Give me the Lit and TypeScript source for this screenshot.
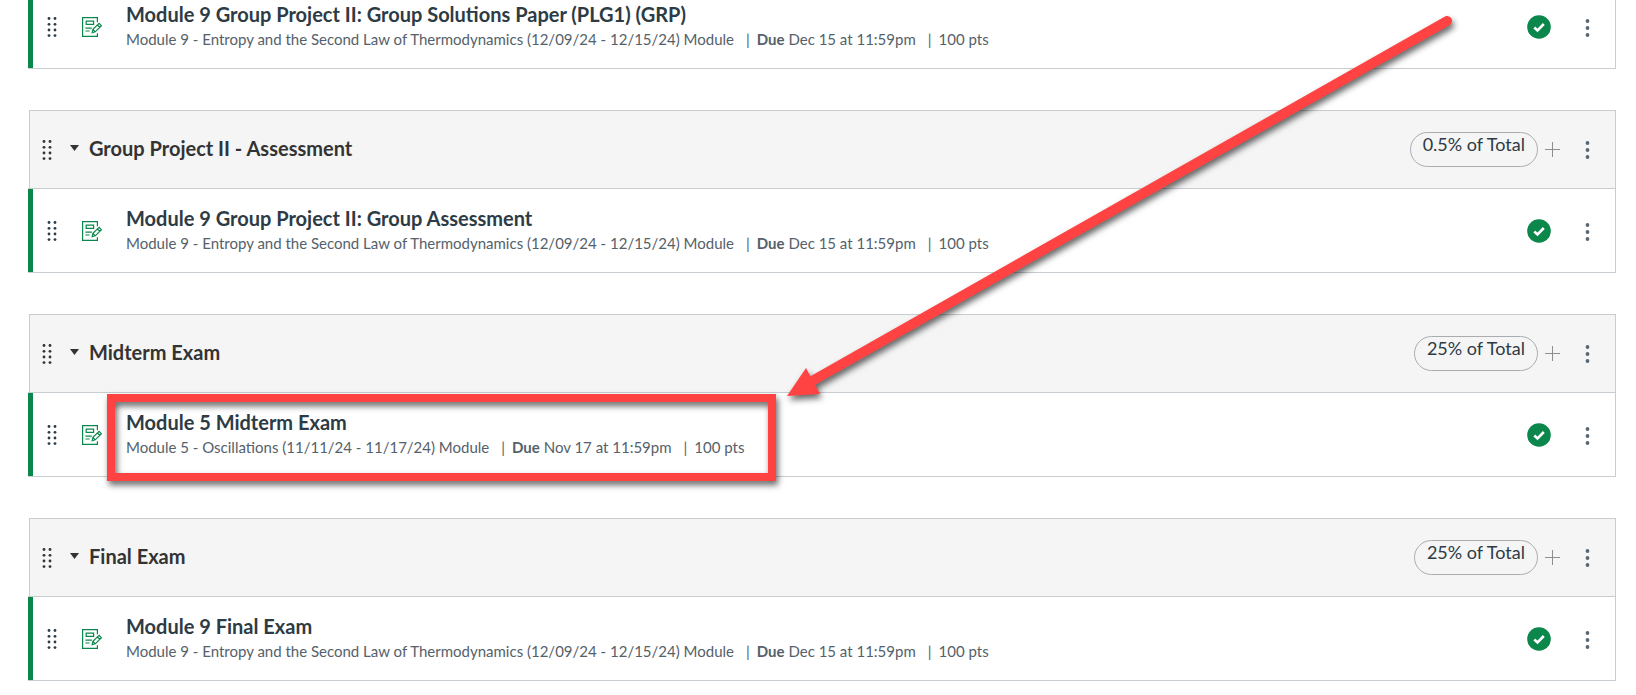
import { LitElement, html, css, svg } from "lit";
import { customElement, property } from "lit/decorators.js";

interface Assignment {
  title: string;
  module: string;
  due: string;
  points: string;
}

interface Group {
  name?: string;
  weight?: string;
  items: Assignment[];
}

const MODULE_9 = "Module 9 - Entropy and the Second Law of Thermodynamics (12/09/24 - 12/15/24) Module";

const GROUPS: Group[] = [
  {
    items: [
      {
        title: "Module 9 Group Project II: Group Solutions Paper (PLG1) (GRP)",
        module: MODULE_9,
        due: "Dec 15 at 11:59pm",
        points: "100 pts",
      },
    ],
  },
  {
    name: "Group Project II - Assessment",
    weight: "0.5% of Total",
    items: [
      {
        title: "Module 9 Group Project II: Group Assessment",
        module: MODULE_9,
        due: "Dec 15 at 11:59pm",
        points: "100 pts",
      },
    ],
  },
  {
    name: "Midterm Exam",
    weight: "25% of Total",
    items: [
      {
        title: "Module 5 Midterm Exam",
        module: "Module 5 - Oscillations (11/11/24 - 11/17/24) Module",
        due: "Nov 17 at 11:59pm",
        points: "100 pts",
      },
    ],
  },
  {
    name: "Final Exam",
    weight: "25% of Total",
    items: [
      {
        title: "Module 9 Final Exam",
        module: MODULE_9,
        due: "Dec 15 at 11:59pm",
        points: "100 pts",
      },
    ],
  },
];

const handleIcon = html`
  <svg class="handle" width="10" height="20" viewBox="0 0 10 20" fill="currentColor" aria-hidden="true">
    ${[1.5, 7.3, 13, 18.6].map(
      (y) => svg`<circle cx="2" cy=${y} r="1.4"></circle><circle cx="8" cy=${y} r="1.4"></circle>`
    )}
  </svg>
`;

const kebabIcon = html`
  <svg width="6" height="20" viewBox="0 0 6 20" fill="currentColor" aria-hidden="true">
    <circle cx="3.5" cy="3" r="1.9"></circle>
    <circle cx="3.5" cy="10" r="1.9"></circle>
    <circle cx="3.5" cy="17" r="1.9"></circle>
  </svg>
`;

const assignmentIcon = html`
  <svg class="kind" width="20" height="20" viewBox="0 0 20 20" fill="none" stroke="currentColor" stroke-width="1.2" aria-hidden="true">
    <path d="M15.4 5.2V0.6H0.6v18.8h14.8v-3.2"></path>
    <path d="M4.2 4.1h7.4v3.2H4.2z"></path>
    <path d="M3.4 11.2h6.4M3.4 14h4.2"></path>
    <path d="M10.2 15.6l.7-3.2 6.2-6 2.3 2.3-6.1 6.1zM15.4 8l2.4 2.4M11 12.5l2.3 2.3"></path>
  </svg>
`;

const sharedStyles = css`
  *,
  *::before {
    box-sizing: border-box;
  }
  button {
    display: flex;
    align-items: center;
    justify-content: center;
    padding: 0;
    border: 0;
    background: none;
    color: inherit;
    font: inherit;
    cursor: pointer;
  }
  svg {
    display: block;
    flex: none;
  }
  .kebab {
    width: 32px;
    height: 36px;
    color: #5b6770;
  }
`;

@customElement("assignment-row")
class AssignmentRow extends LitElement {
  @property({ attribute: false }) item!: Assignment;

  static styles = [
    sharedStyles,
    css`
      :host {
        display: block;
      }
      .row {
        display: flex;
        align-items: center;
        height: 85px;
        margin-left: -1px;
        padding: 0 12px 0 14px;
        border: 1px solid #c7cdd1;
        border-left: 0;
        background: linear-gradient(#0b874b, #0b874b) left / 5px 100% no-repeat border-box #fff;
      }
      .handle {
        margin-left: 5px;
        color: #2d3b45;
      }
      .kind {
        margin-left: 25px;
        color: #0b874b;
      }
      .info {
        flex: 1;
        min-width: 0;
        margin-left: 24px;
      }
      .title {
        display: block;
        color: #2d3b45;
        font-size: 20px;
        font-weight: 700;
        line-height: 24px;
        text-decoration: none;
      }
      .meta {
        display: flex;
        color: #55616a;
        font-size: 15px;
        line-height: 26px;
      }
      .part + .part::before {
        content: "|";
        margin: 0 7px 0 12px;
      }
      .published {
        width: 24px;
        height: 24px;
        margin-right: 20px;
      }
      .kebab {
        padding-top: 2px;
      }
    `,
  ];

  render() {
    const { title, module, due, points } = this.item;
    return html`
      <div class="row">
        ${handleIcon} ${assignmentIcon}
        <div class="info">
          <a class="title" href="#">${title}</a>
          <div class="meta">
            <span class="part">${module}</span>
            <span class="part"><b>Due</b> ${due}</span>
            <span class="part">${points}</span>
          </div>
        </div>
        <button class="published" aria-label="Published">
          <svg width="24" height="24" viewBox="0 0 24 24" aria-hidden="true">
            <circle cx="12" cy="12" r="11.8" fill="#0b874b"></circle>
            <path d="M7.3 12.5l3.2 3L16.8 9" fill="none" stroke="#fff" stroke-width="2.6"></path>
          </svg>
        </button>
        <button class="kebab" aria-label="Assignment options">${kebabIcon}</button>
      </div>
    `;
  }
}

@customElement("assignment-group")
class AssignmentGroup extends LitElement {
  @property({ attribute: false }) group!: Group;

  static styles = [
    sharedStyles,
    css`
      :host {
        display: block;
      }
      .header {
        display: flex;
        align-items: center;
        height: 78px;
        padding: 0 12px;
        border: 1px solid #c7cdd1;
        border-bottom: 0;
        background: #f5f5f5;
        color: #2d3b45;
      }
      .handle {
        color: #333;
      }
      .name {
        margin: 0;
        flex: 1;
        font-size: 20px;
        line-height: 24px;
      }
      .toggle {
        gap: 10px;
        margin-left: 18px;
        padding-bottom: 4px;
        color: #333;
      }
      .weight {
        height: 35px;
        padding: 0 12px;
        border: 1px solid #a9adb0;
        border-radius: 18px;
        font-size: 18px;
        line-height: 22px;
      }
      .add {
        width: 29px;
        height: 36px;
        margin-right: 4px;
        color: #8b8f92;
      }
    `,
  ];

  render() {
    const { name, weight, items } = this.group;
    return html`
      ${name
        ? html`
            <div class="header">
              ${handleIcon}
              <h2 class="name">
                <button class="toggle" aria-expanded="true">
                  <svg width="9" height="6" viewBox="0 0 9 6" fill="currentColor" aria-hidden="true">
                    <path d="M0 0h9L4.5 6z"></path>
                  </svg>
                  ${name}
                </button>
              </h2>
              <span class="weight">${weight}</span>
              <button class="add" aria-label="Add assignment to ${name}">
                <svg width="15" height="15" viewBox="0 0 15 15" stroke="currentColor" aria-hidden="true">
                  <path d="M7.5 0v15M0 7.5h15"></path>
                </svg>
              </button>
              <button class="kebab" aria-label="Group options">${kebabIcon}</button>
            </div>
          `
        : null}
      ${items.map((item) => html`<assignment-row .item=${item}></assignment-row>`)}
    `;
  }
}

@customElement("app-root")
class AppRoot extends LitElement {
  static styles = css`
    :host {
      display: block;
      position: relative;
      overflow: hidden;
      background: #fff;
      font-family: Lato, "Liberation Sans", sans-serif;
    }
    .groups {
      display: flex;
      flex-direction: column;
      gap: 41px;
      margin-top: -16px;
      padding: 0 20px 14px 29px;
    }
    .callout {
      position: absolute;
      top: 0;
      left: 0;
      pointer-events: none;
      filter: drop-shadow(2px 4px 3px rgba(0, 0, 0, 0.6));
    }
  `;

  render() {
    return html`
      <main class="groups">
        ${GROUPS.map((group) => html`<assignment-group .group=${group}></assignment-group>`)}
      </main>
      <svg class="callout" width="1636" height="695" viewBox="0 0 1636 695" aria-hidden="true">
        <rect x="111" y="398" width="661" height="79" fill="none" stroke="#ff4242" stroke-width="8"></rect>
        <path d="M1447 21L812 381" fill="none" stroke="#ff4242" stroke-width="10" stroke-linecap="round"></path>
        <path d="M787 396l19-28 14 26z" fill="#ff4242"></path>
      </svg>
    `;
  }
}
